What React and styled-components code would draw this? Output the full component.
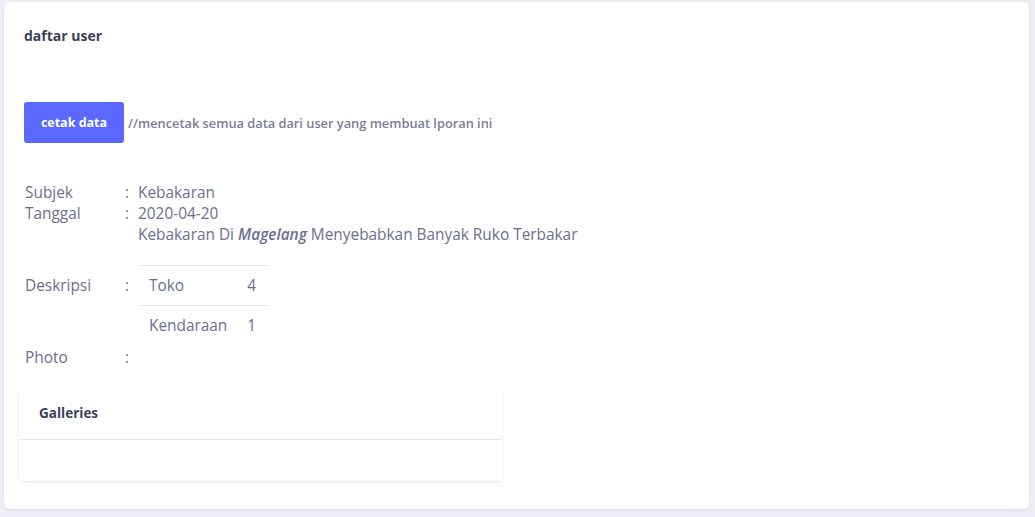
import styled, { createGlobalStyle } from 'styled-components';

const GlobalStyle = createGlobalStyle`
  body {
    margin: 0;
    background: #eeeef7;
    font-family: "Open Sans", Lato, sans-serif;
  }
`;

const Page = styled.div`
  padding: 2px 6px 8px 4px;
`;

const Card = styled.div`
  background: #fff;
  border-radius: 5px;
  box-shadow: 0 1px 3px rgba(70, 70, 140, 0.12);
  padding: 24px 20px 28px 20px;
  min-height: 455px;
`;

const Title = styled.h4`
  margin: 0;
  font-size: 14px;
  font-weight: 700;
  color: #3c3f5c;
`;

const Toolbar = styled.div`
  display: flex;
  align-items: center;
  gap: 4px;
  margin-top: 57px;
`;

const Button = styled.button`
  width: 100px;
  height: 41px;
  border: none;
  border-radius: 3px;
  background: #5b67fd;
  color: #fff;
  font-family: inherit;
  font-size: 12.5px;
  font-weight: 700;
`;

const Note = styled.span`
  font-size: 12.8px;
  font-weight: 600;
  color: #7b7d99;
`;

const Info = styled.div`
  margin: 39px 0 0 1px;
  display: grid;
  grid-template-columns: 100px 13px auto;
  align-items: start;
  justify-content: start;
  font-size: 15.4px;
  color: #6c6f8f;
  line-height: 21px;
`;

const Label = styled.div`
  padding-top: ${(p) => (p.offset ? '30px' : '0')};
`;

const Value = styled.div`
  grid-column: ${(p) => (p.full ? '3' : 'auto')};

  b {
    font-weight: 600;
  }
`;

const Table = styled.table`
  border-collapse: collapse;
  margin: 20px 0 2px 1px;
  font-size: 15.4px;
  color: #6c6f8f;

  td {
    border-top: 1px solid #e6e6f0;
    padding: 9px 20px 9px 10px;
    height: 21px;
  }
  td:last-child {
    padding-left: 0;
    padding-right: 13px;
  }
`;

const Gallery = styled.div`
  margin: 21px 0 0 -5px;
  width: 483px;
  border-radius: 4px;
  box-shadow: 0 1px 3px rgba(70, 70, 140, 0.16);
`;

const GalleryHead = styled.div`
  padding: 15px 20px;
  height: 20px;
  font-size: 13.5px;
  font-weight: 700;
  color: #3c3f5c;
  border-bottom: 1px solid #e6e6f0;
`;

const GalleryBody = styled.div`
  height: 41px;
`;

export default function App() {
  return (
    <>
      <GlobalStyle />
      <Page>
        <Card>
          <Title>daftar user</Title>
          <Toolbar>
            <Button>cetak data</Button>
            <Note>//mencetak semua data dari user yang membuat lporan ini</Note>
          </Toolbar>
          <Info>
            <Label>Subjek</Label>
            <Label>:</Label>
            <Value>Kebakaran</Value>
            <Label>Tanggal</Label>
            <Label>:</Label>
            <Value>2020-04-20</Value>
            <Value full>
              Kebakaran Di <i><b>Magelang</b></i> Menyebabkan Banyak Ruko Terbakar
            </Value>
            <Label offset>Deskripsi</Label>
            <Label offset>:</Label>
            <Value>
              <Table>
                <tbody>
                  <tr><td>Toko</td><td>4</td></tr>
                  <tr><td>Kendaraan</td><td>1</td></tr>
                </tbody>
              </Table>
            </Value>
            <Label>Photo</Label>
            <Label>:</Label>
            <Value />
          </Info>
          <Gallery>
            <GalleryHead>Galleries</GalleryHead>
            <GalleryBody />
          </Gallery>
        </Card>
      </Page>
    </>
  );
}
